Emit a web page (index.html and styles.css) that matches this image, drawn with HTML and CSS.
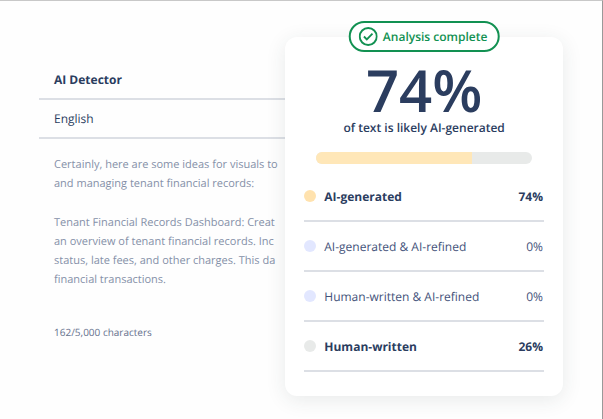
FILE: index.html
```html
<!DOCTYPE html>
<html lang="en">
<head>
  <meta charset="UTF-8" />
  <meta name="viewport" content="width=device-width, initial-scale=1.0"/>
  <title>AI Detector</title>
  <link rel="stylesheet" href="styles.css">
</head>
<body>
  <main class="page">
    <section class="detector">
      <h1 class="detector-title">AI Detector</h1>
      <div class="detector-language">English</div>
      <div class="detector-text">
        <p>Certainly, here are some ideas for visuals to<br>
        and managing tenant financial records:</p>
        <p>Tenant Financial Records Dashboard: Creat<br>
        an overview of tenant financial records. Inc<br>
        status, late fees, and other charges. This da<br>
        financial transactions.</p>
      </div>
      <div class="detector-count">162/5,000 characters</div>
    </section>

    <section class="card">
      <div class="badge">
        <svg class="badge-icon" viewBox="0 0 20 20" fill="none" stroke="currentColor" stroke-width="2">
          <circle cx="10" cy="10" r="9"/>
          <path d="M5.5 10l3 3 6-6"/>
        </svg>
        Analysis complete
      </div>
      <div class="score">74%</div>
      <p class="score-label">of text is likely AI-generated</p>
      <div class="bar"><div class="bar-fill" style="width: 72%"></div></div>
      <ul class="results">
        <li class="strong"><span class="dot yellow"></span>AI-generated <span class="value">74%</span></li>
        <li><span class="dot blue"></span>AI-generated &amp; AI-refined <span class="value">0%</span></li>
        <li><span class="dot blue"></span>Human-written &amp; AI-refined <span class="value">0%</span></li>
        <li class="strong"><span class="dot grey"></span>Human-written <span class="value">26%</span></li>
      </ul>
    </section>
  </main>
</body>
</html>
```

FILE: styles.css
```css
* {
  box-sizing: border-box;
}

body {
  margin: 0;
  font-family: 'Open Sans', sans-serif;
  font-size: 12px;
  text-rendering: geometricPrecision;
  color: #2b3d5f;
  background: #fefefe;
}

h1, p, ul {
  margin: 0;
  padding: 0;
}

.page {
  display: flex;
  align-items: flex-start;
  min-height: 100vh;
  padding: 36px 39px 22px;
  border-top: 1px solid #c8c8c8;
  border-right: 1px solid #999;
}

/* left side, runs under the card */
.detector {
  flex: 1;
  min-width: 0;
  padding-top: 24px;
  white-space: nowrap;
}

.detector-title, .detector-language {
  padding: 0 15px;
  border-bottom: 2px solid #dcdfe5;
  font-size: 12px;
  line-height: 37px;
}

.detector-title {
  font-weight: bold;
}

.detector-text {
  padding: 16px 0 0 15px;
  font-size: 11px;
  line-height: 19px;
  color: #8590a8;
}

.detector-text p + p {
  margin-top: 20px;
}

.detector-count {
  padding: 36px 0 0 15px;
  font-size: 10px;
  line-height: 14px;
  color: #66728e;
}

/* result card */
.card {
  position: relative;
  flex: 0 0 53%;
  padding: 24px 19px;
  border-radius: 12px;
  background: #fff;
  box-shadow: 0 4px 20px rgba(40, 60, 60, 0.1);
}

.badge {
  position: absolute;
  top: -16px;
  left: 50%;
  transform: translateX(-50%);
  display: flex;
  align-items: center;
  gap: 5px;
  height: 31px;
  padding: 0 10px 0 8px;
  border: 2px solid #129152;
  border-radius: 16px;
  background: #fff;
  color: #129152;
  font-weight: 600;
  white-space: nowrap;
}

.badge-icon {
  width: 19px;
  height: 19px;
}

.score {
  font-size: 58px;
  font-weight: 600;
  line-height: 58px;
  text-align: center;
}

.score-label {
  font-weight: 600;
  line-height: 18px;
  text-align: center;
}

.bar {
  height: 12px;
  margin: 15px 12px 8px;
  border-radius: 6px;
  background: #e8eae9;
  overflow: hidden;
}

.bar-fill {
  height: 100%;
  background: #ffe7b8;
}

.results {
  list-style: none;
}

.results li {
  display: flex;
  align-items: center;
  height: 50px;
  padding-right: 1px;
  border-bottom: 2px solid #dcdfe5;
  color: #43527a;
}

.results .strong {
  font-weight: bold;
  color: #2b3d5f;
}

.value {
  margin-left: auto;
}

.dot {
  width: 12px;
  height: 12px;
  margin-right: 8px;
  border-radius: 50%;
}

.yellow {
  background: #ffe2ae;
}

.blue {
  background: #e2e7ff;
}

.grey {
  background: #e8eae9;
}
```
